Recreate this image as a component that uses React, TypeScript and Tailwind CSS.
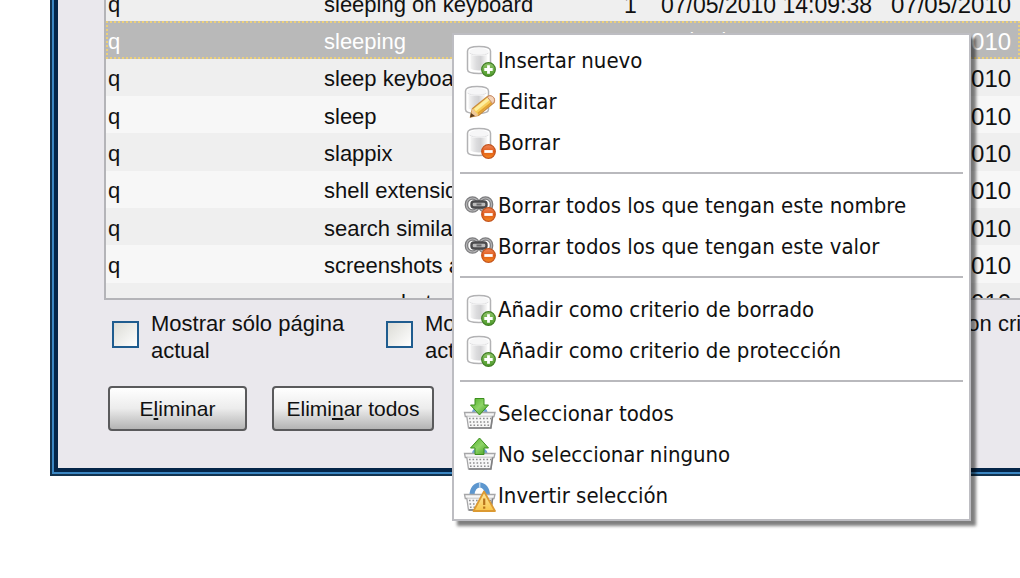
import React from 'react';
import { clsx } from 'clsx';

type IconName = 'dbAdd' | 'dbEdit' | 'dbDelete' | 'linkDelete' | 'basketIn' | 'basketOut' | 'basketWarn';

interface Row {
  name: string;
  value: string;
  count: number;
  first: string;
  last: string;
  selected?: boolean;
}

const rows: Row[] = [
  { name: 'q', value: 'sleeping on keyboard', count: 1, first: '07/05/2010 14:09:38', last: '07/05/2010' },
  { name: 'q', value: 'sleeping', count: 1, first: '07/05/2010 14:12:11', last: '07/05/2010', selected: true },
  { name: 'q', value: 'sleep keyboard', count: 1, first: '07/05/2010 14:09:12', last: '07/05/2010' },
  { name: 'q', value: 'sleep', count: 1, first: '07/05/2010 14:08:55', last: '07/05/2010' },
  { name: 'q', value: 'slappix', count: 1, first: '07/05/2010 13:51:20', last: '07/05/2010' },
  { name: 'q', value: 'shell extension', count: 1, first: '07/05/2010 13:40:02', last: '07/05/2010' },
  { name: 'q', value: 'search similar', count: 1, first: '07/05/2010 13:32:47', last: '07/05/2010' },
  { name: 'q', value: 'screenshots all', count: 1, first: '07/05/2010 13:21:09', last: '07/05/2010' },
  { name: 'q', value: 'screenshot', count: 1, first: '07/05/2010 13:20:31', last: '07/05/2010' },
];

const menuGroups: { icon: IconName; label: string }[][] = [
  [
    { icon: 'dbAdd', label: 'Insertar nuevo' },
    { icon: 'dbEdit', label: 'Editar' },
    { icon: 'dbDelete', label: 'Borrar' },
  ],
  [
    { icon: 'linkDelete', label: 'Borrar todos los que tengan este nombre' },
    { icon: 'linkDelete', label: 'Borrar todos los que tengan este valor' },
  ],
  [
    { icon: 'dbAdd', label: 'Añadir como criterio de borrado' },
    { icon: 'dbAdd', label: 'Añadir como criterio de protección' },
  ],
  [
    { icon: 'basketIn', label: 'Seleccionar todos' },
    { icon: 'basketOut', label: 'No seleccionar ninguno' },
    { icon: 'basketWarn', label: 'Invertir selección' },
  ],
];

// Gradients shared by every menu icon
const IconDefs = () => (
  <svg width="0" height="0" className="absolute" aria-hidden="true">
    <defs>
      <linearGradient id="metal" x1="0" x2="1" y1="0" y2="0">
        <stop offset="0" stopColor="#f4f4f4" />
        <stop offset="0.35" stopColor="#dcdcde" />
        <stop offset="0.6" stopColor="#d2d2d4" />
        <stop offset="1" stopColor="#fbfbfb" />
      </linearGradient>
      <linearGradient id="green" x1="0" x2="0" y1="0" y2="1">
        <stop offset="0" stopColor="#8fc468" />
        <stop offset="1" stopColor="#4c9a2a" />
      </linearGradient>
      <linearGradient id="orange" x1="0" x2="0" y1="0" y2="1">
        <stop offset="0" stopColor="#f0875a" />
        <stop offset="0.5" stopColor="#e05a18" />
        <stop offset="1" stopColor="#f58a20" />
      </linearGradient>
      <linearGradient id="arrow" x1="0" x2="1" y1="0" y2="1">
        <stop offset="0" stopColor="#4cae24" />
        <stop offset="0.5" stopColor="#8fd468" />
        <stop offset="1" stopColor="#3f9c1c" />
      </linearGradient>
      <linearGradient id="amber" x1="0" x2="0" y1="0" y2="1">
        <stop offset="0" stopColor="#fde9a4" />
        <stop offset="1" stopColor="#f9c64a" />
      </linearGradient>
    </defs>
  </svg>
);

const Cylinder = () => (
  <g>
    <path d="M3.5 6C3.5 3 8.5 1.5 15 1.5S26.5 3 26.5 6V24.5C26.5 27 21.5 28.5 15 28.5S3.5 27 3.5 24.5Z" fill="#fff" stroke="#b2b2b4" strokeWidth="1.5" />
    <path d="M6.5 9.5C10 11.5 20 11.5 23.5 9.5V23.5C20.5 26 9.5 26 6.5 23.5Z" fill="url(#metal)" />
    <ellipse cx="15" cy="6.5" rx="9.5" ry="3.5" fill="#f6f6f7" />
    <path d="M5.5 8C9 11 21 11 24.5 8" fill="none" stroke="#e0e0e2" />
  </g>
);

const Badge = ({ add }: { add?: boolean }) => (
  <g>
    <circle cx="24.5" cy="24.5" r="6.8" fill={add ? 'url(#green)' : 'url(#orange)'} stroke={add ? '#3f7d22' : '#c4531c'} strokeWidth="1.2" />
    <path d={add ? 'M20.3 24.5H28.7M24.5 20.3V28.7' : 'M20.3 24.5H28.7'} stroke="#fff" strokeWidth="2.8" />
  </g>
);

const Chain = () => (
  <g fill="none">
    <rect x="2.5" y="8" width="12" height="13" rx="6" stroke="#7c7c7e" strokeWidth="3.6" />
    <rect x="15.5" y="8" width="12" height="13" rx="6" stroke="#7c7c7e" strokeWidth="3.6" />
    <rect x="2.5" y="8" width="12" height="13" rx="6" stroke="#b4b4b6" strokeWidth="1.2" />
    <rect x="15.5" y="8" width="12" height="13" rx="6" stroke="#b4b4b6" strokeWidth="1.2" />
    <rect x="7.5" y="11.5" width="15" height="6" rx="2.5" fill="#bbb" stroke="#4a4a4c" strokeWidth="2.4" />
    <path d="M12.5 14.5H17.5" stroke="#6a6a6c" strokeWidth="2" />
  </g>
);

const Basket = () => (
  <g>
    <path d="M0.5 14.5H31L30 18.5H28.8L27 30H4.5L2.8 18.5H1.3Z" fill="#f7f7f7" stroke="#a6a6a8" strokeWidth="1.3" />
    <path d="M5 20.5H27M5.5 24H26.5M6 27.3H26" stroke="#8e8e90" strokeWidth="1.6" strokeDasharray="1.6 1.9" />
    <path d="M3 18.2H28.5" stroke="#c4c4c6" />
    <path d="M28.5 18.5L26.8 30H5" fill="none" stroke="#808082" strokeWidth="1.6" />
  </g>
);

const MenuIcon = ({ name }: { name: IconName }) => (
  <svg viewBox="0 0 32 32" className="w-8 h-8 shrink-0 overflow-visible" aria-hidden="true">
    {(name === 'dbAdd' || name === 'dbDelete') && <Cylinder />}
    {name === 'dbAdd' && <Badge add />}
    {name === 'dbDelete' && <Badge />}
    {name === 'dbEdit' && (
      <>
        <g transform="translate(-2 -1)">
          <Cylinder />
        </g>
        <path d="M6.5 31L8.5 22.5L23.5 10.5C27 8.5 32 12.5 30 16.5L14.5 29.5Z" fill="#f7cf5c" stroke="#c98a3c" strokeWidth="1.3" />
        <path d="M11 24L24.5 13" stroke="#fdeea0" strokeWidth="3" />
        <path d="M14 27.5L27.5 16.8" stroke="#e2a232" strokeWidth="1.8" />
        <path d="M24.5 10C28 8.5 32 12.5 30 16.5L28.5 17.5L23.5 11.2Z" fill="#f3d3b8" stroke="#c98a6c" />
        <path d="M6.5 31L8.5 22.5L14.5 29.5Z" fill="#f0c99a" />
        <path d="M6 31.5L7 27L11 30Z" fill="#5c3d1c" />
      </>
    )}
    {name === 'linkDelete' && (
      <>
        <Chain />
        <Badge />
      </>
    )}
    {name === 'basketWarn' && (
      <>
        <path d="M8 15.5C8 1.5 23.5 1.5 23.5 15.5" fill="none" stroke="#5d97cf" strokeWidth="5" />
        <path d="M15.7 3V8" stroke="#b8d4ee" strokeWidth="1.5" />
      </>
    )}
    {(name === 'basketIn' || name === 'basketOut') && (
      <path d="M9 15.5C9 8.5 22.5 8.5 22.5 15.5" fill="#a9c9e6" stroke="#6fa3d6" strokeWidth="3" />
    )}
    {name.startsWith('basket') && <Basket />}
    {name === 'basketIn' && (
      <path d="M11 0.5H20V7H24.5L15.5 17L6.5 7H11Z" fill="url(#arrow)" stroke="#3c8f1e" />
    )}
    {name === 'basketOut' && (
      <path d="M11 15.5H20V9H24.5L15.5 -1L6.5 9H11Z" fill="url(#arrow)" stroke="#3c8f1e" />
    )}
    {name === 'basketWarn' && (
      <>
        <path d="M20 11.5L31 31H9.5Z" fill="url(#amber)" stroke="#dc9a32" strokeWidth="1.8" strokeLinejoin="round" />
        <path d="M20.2 18.5V25M20.2 26.5V28.8" stroke="#b8741c" strokeWidth="2.2" />
      </>
    )}
  </svg>
);

const ContextMenu = () => (
  <div
    role="menu"
    className="absolute left-[452px] top-[33px] w-[519px] border-2 border-[#bdbdc2] bg-white pt-[5px] pb-[3px] shadow-[5px_5px_3px_rgba(0,0,0,0.5)]"
  >
    {menuGroups.map((group, i) => (
      <React.Fragment key={i}>
        {i > 0 && (
          <div role="separator" className="h-[22px] px-[6px] pb-[3px] flex items-center">
            <div className="h-[2px] w-full bg-[#b9b9bd]" />
          </div>
        )}
        {group.map(item => (
          <button
            key={item.label}
            type="button"
            role="menuitem"
            className="flex h-[41px] w-full items-center gap-[2px] pl-[10px] text-left text-[22px] font-['DejaVu_Sans_Condensed','DejaVu_Sans',sans-serif] whitespace-nowrap"
          >
            <MenuIcon name={item.icon} />
            <span>{item.label}</span>
          </button>
        ))}
      </React.Fragment>
    ))}
  </div>
);

const CheckOption = ({ className, children }: { className?: string; children: React.ReactNode }) => (
  <label className={clsx('flex shrink-0 items-start gap-3', className)}>
    <input
      type="checkbox"
      className="mt-[11px] h-[27px] w-[27px] shrink-0 appearance-none border-2 border-[#1f5c8f] bg-linear-to-br from-[#dcdcd6] to-white"
    />
    <span className="leading-[27px]">{children}</span>
  </label>
);

const PushButton = ({ className, children }: { className?: string; children: React.ReactNode }) => (
  <button
    type="button"
    className={clsx(
      'h-[45px] rounded-[4px] border-2 border-[#5a5a5c] bg-linear-to-b from-white via-[#ececec] to-[#b4b4b4] text-[21px] whitespace-nowrap',
      className
    )}
  >
    {children}
  </button>
);

const App: React.FC = () => {
  return (
    <div className="relative min-h-screen overflow-hidden bg-white font-['Liberation_Sans',Arial,sans-serif] text-[22px] text-[#111]">
      <IconDefs />
      <div className="ml-[50px] border-b-2 border-l-2 border-[#12324e]">
        <div className="border-b-2 border-l-2 border-[#3b86c2]">
          <div className="border-b-4 border-l-4 border-[#042548] bg-[#eae8ed] pb-[37px] pl-[46px]">
            <div className="h-[300px] overflow-hidden border-b-2 border-l-2 border-[#b4b4b8]">
              <table className="-mt-4 h-[336px] w-full table-fixed border-collapse leading-6 whitespace-nowrap">
                <colgroup>
                  <col className="w-[216px]" />
                  <col className="w-[300px]" />
                  <col className="w-[37px]" />
                  <col className="w-[230px]" />
                  <col />
                </colgroup>
                <tbody>
                  {rows.map((row, i) => (
                    <tr
                      key={row.value}
                      className={clsx(
                        row.selected
                          ? 'bg-[#b9b9b9] text-white outline-2 -outline-offset-2 outline-dotted outline-[#ecd07a]'
                          : i % 2 === 0
                            ? 'bg-[#efefef]'
                            : 'bg-[#f7f7f7]'
                      )}
                    >
                      <td className="pt-1 pl-[2px]">{row.name}</td>
                      <td className="pt-1 pl-[2px]">{row.value}</td>
                      <td className="pt-1 pl-[2px] text-[23px]">{row.count}</td>
                      <td className="pt-1 pl-[2px] text-[23px]">{row.first}</td>
                      <td className="pt-1 pl-[2px] text-[24px]">{row.last}</td>
                    </tr>
                  ))}
                </tbody>
              </table>
            </div>

            <div className="flex pt-[10px] pl-2 whitespace-nowrap">
              <CheckOption className="w-[274px]">
                Mostrar sólo pá<u>g</u>ina
                <br />
                actual
              </CheckOption>
              <CheckOption className="w-[332px]">
                Mostrar sólo sitio
                <br />
                actual
              </CheckOption>
              <CheckOption>Mostrar sólo página con criterio</CheckOption>
            </div>

            <div className="flex gap-[25px] pt-[22px] pl-1">
              <PushButton className="w-[139px]">
                E<u>l</u>iminar
              </PushButton>
              <PushButton className="w-[162px]">
                Elimi<u>n</u>ar todos
              </PushButton>
            </div>
          </div>
        </div>
      </div>
      <ContextMenu />
    </div>
  );
};

export default App;
